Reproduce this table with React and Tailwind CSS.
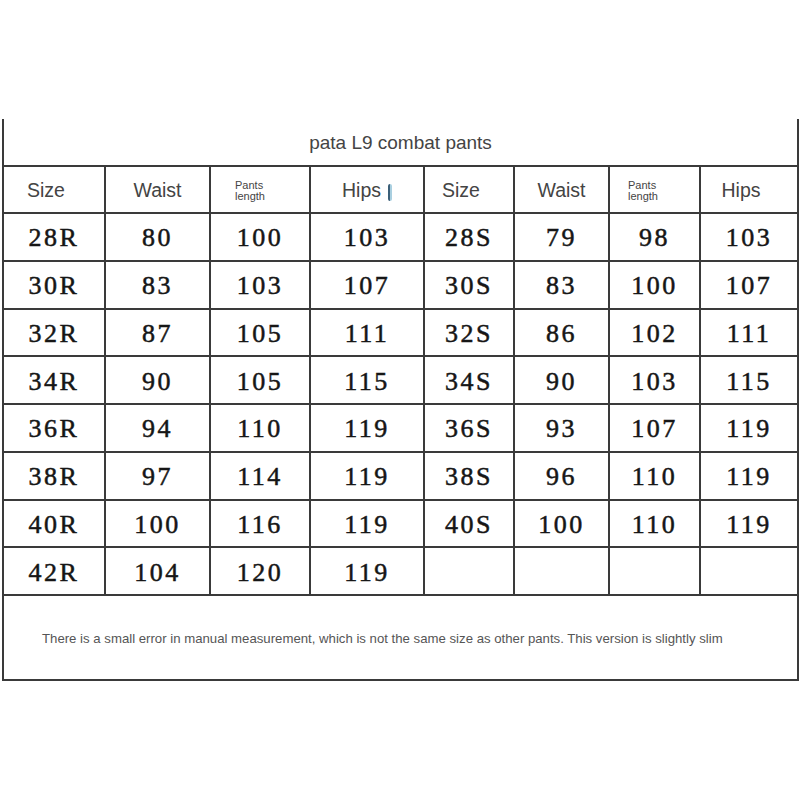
const header = ["Size", "Waist", "PL", "Hips", "Size", "Waist", "PL", "Hips"];

const rows = [
  ["28R", "80", "100", "103", "28S", "79", "98", "103"],
  ["30R", "83", "103", "107", "30S", "83", "100", "107"],
  ["32R", "87", "105", "111", "32S", "86", "102", "111"],
  ["34R", "90", "105", "115", "34S", "90", "103", "115"],
  ["36R", "94", "110", "119", "36S", "93", "107", "119"],
  ["38R", "97", "114", "119", "38S", "96", "110", "119"],
  ["40R", "100", "116", "119", "40S", "100", "110", "119"],
  ["42R", "104", "120", "119", "", "", "", ""],
];

const widths = ["w-[102px]", "w-[105px]", "w-[100px]", "w-[114px]", "w-[90px]", "w-[95px]", "w-[91px]", "w-[98px]"];
const headPad = ["pr-4", "", "pl-[24px]", "", "pr-4", "", "pl-[18px]", "pr-4"];

export default function App() {
  return (
    <div className="w-[800px] h-[800px] bg-white pt-[119px] pl-[2px]">
      <table className="table-fixed border-collapse w-[797px] font-['Liberation_Sans',Arial,sans-serif]">
        <colgroup>
          {widths.map((w, i) => (
            <col key={i} className={w} />
          ))}
        </colgroup>
        <tbody>
          <tr className="h-[47px]">
            <td colSpan={8} className="border-2 border-t-0 border-[#3a3a3a] text-center text-[19px] text-[#444] pt-[2px]">
              pata L9 combat pants
            </td>
          </tr>
          <tr className="h-[47px]">
            {header.map((h, i) => (
              <td key={i} className="border-2 border-[#3a3a3a] text-center text-[#444] pt-[3px]">
                {h === "PL" ? (
                  <div className={"text-[11px] leading-[11px] text-left pr-2 " + headPad[i]}>
                    Pants
                    <br />
                    length
                  </div>
                ) : (
                  <span className={"text-[19.5px] " + headPad[i]}>
                    {h}
                    {i === 3 && (
                      <span className="inline-block align-middle ml-[7px] w-[4px] h-[17px] rounded-sm bg-[#a9cfe0] border-l-2 border-[#3b5f78]" />
                    )}
                  </span>
                )}
              </td>
            ))}
          </tr>
          {rows.map((r, ri) => (
            <tr key={ri} className="h-[47.75px]">
              {r.map((c, ci) => (
                <td
                  key={ci}
                  className="border-2 border-[#3a3a3a] text-center font-['Liberation_Serif','Times_New_Roman',serif] text-[26px] tracking-[2.5px] text-[#161616] [-webkit-text-stroke:0.5px_#161616] pt-[2px]"
                >
                  {c}
                </td>
              ))}
            </tr>
          ))}
          <tr className="h-[85px]">
            <td colSpan={8} className="border-2 border-[#3a3a3a] text-left pl-[38px] pt-[3px] text-[13.2px] text-[#555]">
              There is a small error in manual measurement, which is not the same size as other pants. This version is slightly slim
            </td>
          </tr>
        </tbody>
      </table>
    </div>
  );
}
